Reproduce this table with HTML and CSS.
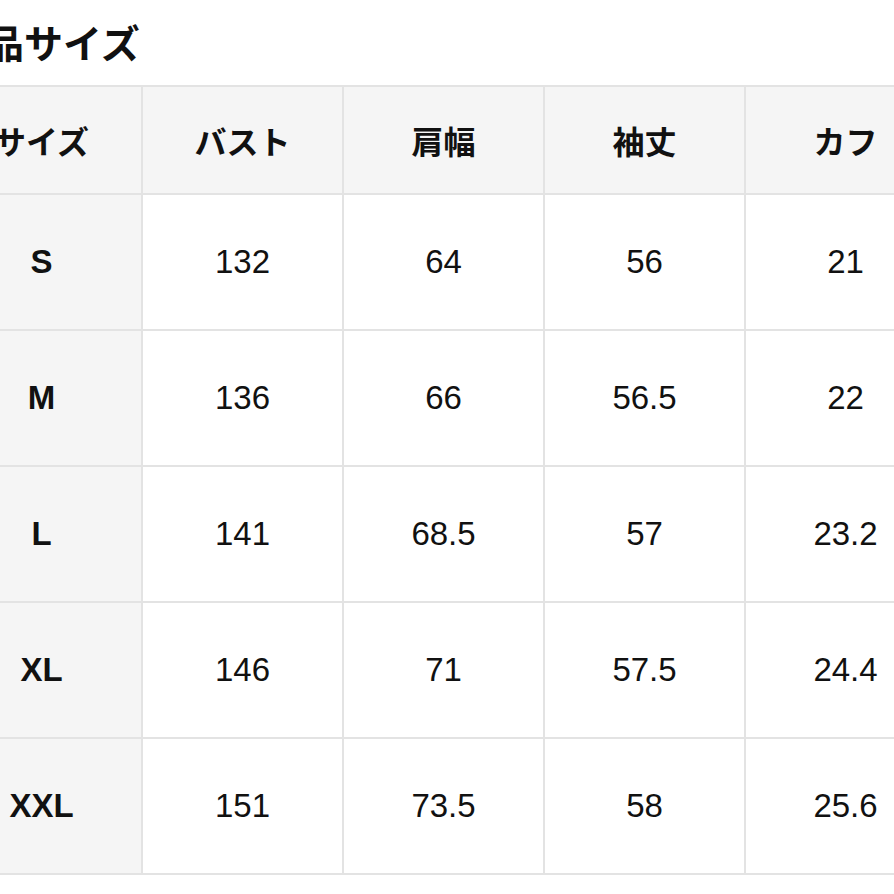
FILE: index.html
```html
<!DOCTYPE html>
<html lang="ja">
<head>
<meta charset="utf-8">
<link rel="stylesheet" href="styles.css">
</head>
<body>
<h2 class="title">商品サイズ</h2>
<table class="size-table">
  <colgroup>
    <col class="c"><col class="c"><col class="c"><col class="c"><col class="c">
  </colgroup>
  <thead>
    <tr><th>サイズ</th><th>バスト</th><th>肩幅</th><th>袖丈</th><th>カフ</th></tr>
  </thead>
  <tbody>
    <tr><th>S</th><td>132</td><td>64</td><td>56</td><td>21</td></tr>
    <tr><th>M</th><td>136</td><td>66</td><td>56.5</td><td>22</td></tr>
    <tr><th>L</th><td>141</td><td>68.5</td><td>57</td><td>23.2</td></tr>
    <tr><th>XL</th><td>146</td><td>71</td><td>57.5</td><td>24.4</td></tr>
    <tr><th>XXL</th><td>151</td><td>73.5</td><td>58</td><td>25.6</td></tr>
  </tbody>
</table>
</body>
</html>
```
FILE: styles.css
```css
html, body {
  margin: 0;
  padding: 0;
  background: #ffffff;
  overflow: hidden;
  width: 894px;
  height: 894px;
}
body {
  font-family: "Liberation Sans", "Noto Sans CJK JP", sans-serif;
  color: #111111;
}
.title {
  margin: 25px 0 20px -54px;
  font-size: 39px;
  line-height: 40px;
  font-weight: 700;
  white-space: nowrap;
}
.size-table {
  margin-left: -60px;
  border-collapse: collapse;
  table-layout: fixed;
  width: 1005px;
}
.size-table .c {
  width: 201px;
}
.size-table th,
.size-table td {
  border: 2px solid #e3e3e3;
  text-align: center;
  vertical-align: middle;
  padding: 0;
  font-size: 33px;
}
.size-table thead th {
  height: 106px;
  background: #f5f5f5;
  font-weight: 700;
  font-size: 32px;
}
.size-table tbody th {
  background: #f5f5f5;
  font-weight: 700;
}
.size-table tbody td,
.size-table tbody th {
  height: 134px;
}
.size-table tbody td {
  font-weight: 400;
  background: #ffffff;
}
```
